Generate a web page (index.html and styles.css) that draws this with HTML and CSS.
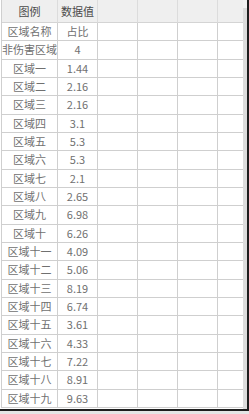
FILE: index.html
```html
<!DOCTYPE html>
<html lang="zh">
<head>
<meta charset="utf-8">
<link rel="stylesheet" href="styles.css">
</head>
<body>
<div class="frame">
  <div class="sheet">
    <div class="grid">
      <div class="cell head">图例</div><div class="cell head">数据值</div><div class="cell head"></div><div class="cell head"></div><div class="cell head"></div><div class="cell head"></div>
      <div class="cell">区域名称</div><div class="cell">占比</div><div class="cell"></div><div class="cell"></div><div class="cell"></div><div class="cell"></div>
      <div class="cell">非伤害区域</div><div class="cell">4</div><div class="cell"></div><div class="cell"></div><div class="cell"></div><div class="cell"></div>
      <div class="cell">区域一</div><div class="cell">1.44</div><div class="cell"></div><div class="cell"></div><div class="cell"></div><div class="cell"></div>
      <div class="cell">区域二</div><div class="cell">2.16</div><div class="cell"></div><div class="cell"></div><div class="cell"></div><div class="cell"></div>
      <div class="cell">区域三</div><div class="cell">2.16</div><div class="cell"></div><div class="cell"></div><div class="cell"></div><div class="cell"></div>
      <div class="cell">区域四</div><div class="cell">3.1</div><div class="cell"></div><div class="cell"></div><div class="cell"></div><div class="cell"></div>
      <div class="cell">区域五</div><div class="cell">5.3</div><div class="cell"></div><div class="cell"></div><div class="cell"></div><div class="cell"></div>
      <div class="cell">区域六</div><div class="cell">5.3</div><div class="cell"></div><div class="cell"></div><div class="cell"></div><div class="cell"></div>
      <div class="cell">区域七</div><div class="cell">2.1</div><div class="cell"></div><div class="cell"></div><div class="cell"></div><div class="cell"></div>
      <div class="cell">区域八</div><div class="cell">2.65</div><div class="cell"></div><div class="cell"></div><div class="cell"></div><div class="cell"></div>
      <div class="cell">区域九</div><div class="cell">6.98</div><div class="cell"></div><div class="cell"></div><div class="cell"></div><div class="cell"></div>
      <div class="cell">区域十</div><div class="cell">6.26</div><div class="cell"></div><div class="cell"></div><div class="cell"></div><div class="cell"></div>
      <div class="cell">区域十一</div><div class="cell">4.09</div><div class="cell"></div><div class="cell"></div><div class="cell"></div><div class="cell"></div>
      <div class="cell">区域十二</div><div class="cell">5.06</div><div class="cell"></div><div class="cell"></div><div class="cell"></div><div class="cell"></div>
      <div class="cell">区域十三</div><div class="cell">8.19</div><div class="cell"></div><div class="cell"></div><div class="cell"></div><div class="cell"></div>
      <div class="cell">区域十四</div><div class="cell">6.74</div><div class="cell"></div><div class="cell"></div><div class="cell"></div><div class="cell"></div>
      <div class="cell">区域十五</div><div class="cell">3.61</div><div class="cell"></div><div class="cell"></div><div class="cell"></div><div class="cell"></div>
      <div class="cell">区域十六</div><div class="cell">4.33</div><div class="cell"></div><div class="cell"></div><div class="cell"></div><div class="cell"></div>
      <div class="cell">区域十七</div><div class="cell">7.22</div><div class="cell"></div><div class="cell"></div><div class="cell"></div><div class="cell"></div>
      <div class="cell">区域十八</div><div class="cell">8.91</div><div class="cell"></div><div class="cell"></div><div class="cell"></div><div class="cell"></div>
      <div class="cell">区域十九</div><div class="cell">9.63</div><div class="cell"></div><div class="cell"></div><div class="cell"></div><div class="cell"></div>
    </div>
  </div>
  <div class="scroll"><div class="arrow"></div></div>
  <div class="edge"></div>
</div>
</body>
</html>
```

FILE: styles.css
```css
html, body {
  margin: 0;
  padding: 0;
  background: #e6e6e6;
}
body {
  width: 249px;
  height: 414px;
  overflow: hidden;
  font-family: "Noto Sans CJK SC", "Liberation Sans", sans-serif;
  font-size: 11px;
}
.frame {
  display: flex;
  height: 409px;
  border-bottom: 2px solid #1e1e1e;
  background: #fff;
}
.sheet {
  flex: 1;
  overflow: hidden;
  padding-left: 1px;
}
.grid {
  display: grid;
  grid-template-columns: 56px 40px 40px 40px 40px 40px;
  grid-template-rows: 23px repeat(21, 18.33px);
  border-left: 1px solid #cfcfcf;
  width: 257px;
}
.cell {
  box-sizing: border-box;
  border-right: 1px solid #cfcfcf;
  border-bottom: 1px solid #cfcfcf;
  color: #707070;
  text-align: center;
  white-space: nowrap;
  line-height: 17px;
  overflow: visible;
}
.head {
  background: #efefef;
  color: #4a4a4a;
  line-height: 22px;
  border-right-color: #dcdcdc;
  border-bottom-color: #d4d4d4;
}
.scroll {
  width: 4px;
  background: #dcdcdc;
  display: flex;
  flex-direction: column;
}
.arrow {
  height: 8px;
  background: #f2f2f2;
}
.edge {
  width: 2px;
  background: #1e1e1e;
}
```
